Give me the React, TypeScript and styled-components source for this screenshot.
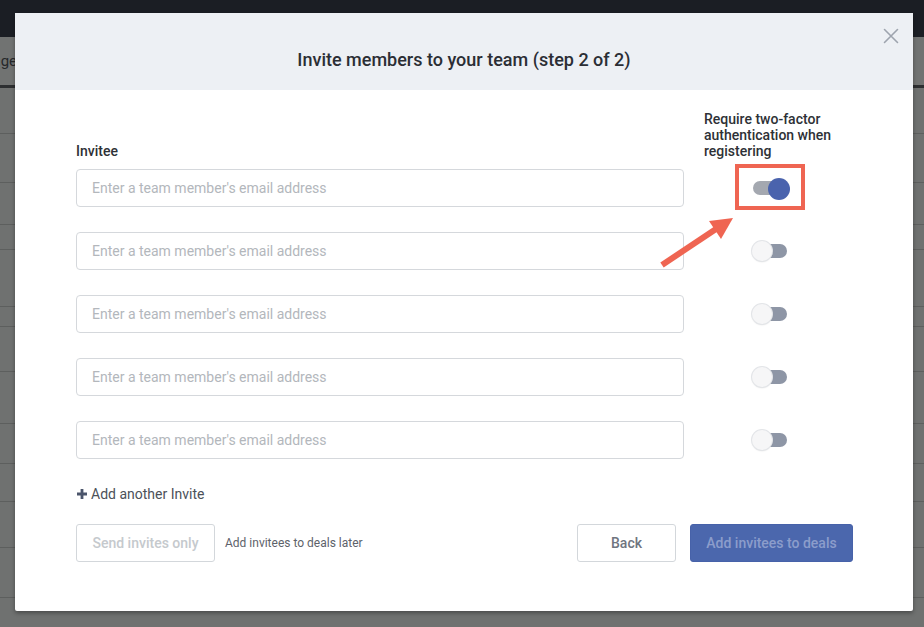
import React from "react";
import styled, { createGlobalStyle } from "styled-components";

const Global = createGlobalStyle`
  html, body { margin: 0; padding: 0; background: #707271; }
  body {
    width: 924px;
    height: 627px;
    overflow: hidden;
    font-family: Roboto, "Liberation Sans", Arial, sans-serif;
  }
  * { box-sizing: border-box; }
`;

const Page = styled.div`
  position: relative;
  width: 924px;
  height: 627px;
  overflow: hidden;
  background-color: #6f7170;
`;

const TopBar = styled.div`
  height: 37px;
  background: #1b1e24;
`;

const SubBar = styled.div`
  height: 51px;
  display: flex;
  align-items: center;
  background-color: #717372;
  border-bottom: 3px solid #2d2f31;
`;

const BehindTab = styled.span`
  margin-left: -37px;
  font-size: 15px;
  color: #26282a;
`;

const BehindRow = styled.div<{ $h: number }>`
  height: ${(p) => p.$h}px;
  background-color: #6f7170;
  border-bottom: 1px solid #5d5f5e;
`;

const Modal = styled.div`
  position: absolute;
  left: 15px;
  top: 13px;
  width: 898px;
  height: 598px;
  background: #ffffff;
  border-radius: 2px;
  box-shadow: 0 2px 4px rgba(0, 0, 0, 0.35);
  display: flex;
  flex-direction: column;
`;

const Header = styled.div`
  position: relative;
  height: 77px;
  background: #edf0f4;
  display: flex;
  align-items: center;
  justify-content: center;
  padding-top: 16px;
`;

const Title = styled.h2`
  margin: 0;
  font-size: 18px;
  font-weight: 500;
  color: #2b2e34;
`;

const Close = styled.button`
  position: absolute;
  right: 13px;
  top: 14px;
  width: 18px;
  height: 18px;
  padding: 0;
  border: 0;
  background: transparent;
  display: flex;
  align-items: center;
  justify-content: center;
  cursor: pointer;
`;

const Body = styled.div`
  position: relative;
  flex: 1;
  padding: 21px 60px 0 61px;
  display: flex;
  flex-direction: column;
`;

const Grid = styled.div`
  display: grid;
  grid-template-columns: 608px 132px;
  column-gap: 20px;
  align-items: center;
`;

const LabelRow = styled(Grid)`
  align-items: end;
  margin-bottom: 10px;
`;

const Label = styled.div`
  font-size: 14px;
  font-weight: 500;
  line-height: 16px;
  color: #2e3136;
`;

const Rows = styled.div`
  display: flex;
  flex-direction: column;
  gap: 25px;
`;

const EmailInput = styled.input`
  width: 608px;
  height: 38px;
  border: 1px solid #d5d8dc;
  border-radius: 4px;
  padding: 0 15px;
  font-family: Roboto, "Liberation Sans", Arial, sans-serif;
  font-size: 14px;
  color: #2e3136;
  outline: none;
  &::placeholder {
    color: #b3b7bc;
  }
`;

const ToggleCell = styled.div`
  position: relative;
  display: flex;
  justify-content: flex-start;
  padding-left: 48px;
  height: 38px;
  align-items: center;
`;

const Toggle = styled.div`
  position: relative;
  width: 36px;
  height: 22px;
`;

const Track = styled.div<{ $on: boolean }>`
  position: absolute;
  left: 1px;
  right: 1px;
  top: 4px;
  height: 14px;
  border-radius: 7px;
  background: ${(p) => (p.$on ? "#a4a8b0" : "#8e96a6")};
`;

const Knob = styled.div<{ $on: boolean }>`
  position: absolute;
  top: 1px;
  ${(p) => (p.$on ? "right: -2px;" : "left: 0;")}
  width: ${(p) => (p.$on ? 22 : 20)}px;
  height: ${(p) => (p.$on ? 22 : 20)}px;
  border-radius: 50%;
  background: ${(p) => (p.$on ? "#4a63ad" : "#f6f6f7")};
  box-shadow: ${(p) =>
    p.$on ? "none" : "0 0 0 1px #e3e5e8, 0 1px 2px rgba(0,0,0,0.12)"};
`;

const Highlight = styled.div`
  position: absolute;
  left: 31px;
  top: -5px;
  width: 70px;
  height: 46px;
  border: 4px solid #ef6552;
  pointer-events: none;
`;

const Arrow = styled.svg`
  position: absolute;
  left: 0;
  top: 0;
  overflow: visible;
  pointer-events: none;
`;

const AddLink = styled.button`
  margin-top: 27px;
  align-self: flex-start;
  display: flex;
  align-items: center;
  gap: 3px;
  padding: 0;
  border: 0;
  background: transparent;
  font-family: Roboto, "Liberation Sans", Arial, sans-serif;
  font-size: 14px;
  line-height: 16px;
  color: #4c5159;
  cursor: pointer;
`;

const Footer = styled.div`
  margin-top: 22px;
  display: flex;
  align-items: center;
`;

const Button = styled.button<{ $variant?: "ghost" | "outline" | "primary"; $w: number }>`
  height: 38px;
  width: ${(p) => p.$w}px;
  border-radius: 3px;
  font-family: Roboto, "Liberation Sans", Arial, sans-serif;
  font-size: 14px;
  font-weight: 500;
  cursor: pointer;
  border: 1px solid
    ${(p) => (p.$variant === "primary" ? "#4762a9" : "#d3d7db")};
  background: ${(p) => (p.$variant === "primary" ? "#4b67ad" : "#ffffff")};
  color: ${(p) =>
    p.$variant === "primary"
      ? "#8c9dcb"
      : p.$variant === "ghost"
      ? "#c5c9cd"
      : "#6f7580"};
`;

const Hint = styled.span`
  margin-left: 10px;
  font-size: 12px;
  color: #5d626a;
`;

const Spacer = styled.div`
  flex: 1;
`;

const RightButtons = styled.div`
  display: flex;
  gap: 14px;
`;

const rows = [true, false, false, false, false];

export default function App() {
  return (
    <>
      <Global />
      <Page>
        <TopBar />
        <SubBar>
          <BehindTab>Manager</BehindTab>
        </SubBar>
        {[46, 49, 42, 25, 57, 20, 45, 52, 40, 38, 46, 50, 36, 47, 44].map(
          (h, i) => (
            <BehindRow key={i} $h={h} />
          )
        )}
        <Modal>
          <Header>
            <Title>Invite members to your team (step 2 of 2)</Title>
            <Close aria-label="Close">
              <svg width="16" height="16" viewBox="0 0 16 16">
                <path
                  d="M1.5 1.5 L14.5 14.5 M14.5 1.5 L1.5 14.5"
                  stroke="#9ea4ae"
                  strokeWidth="1.6"
                  strokeLinecap="round"
                />
              </svg>
            </Close>
          </Header>
          <Body>
            <LabelRow>
              <Label>Invitee</Label>
              <Label>
                Require two-factor
                <br />
                authentication when
                <br />
                registering
              </Label>
            </LabelRow>
            <Rows>
              {rows.map((on, i) => (
                <Grid key={i}>
                  <EmailInput placeholder="Enter a team member's email address" />
                  <ToggleCell>
                    <Toggle>
                      <Track $on={on} />
                      <Knob $on={on} />
                    </Toggle>
                    {i === 0 && <Highlight />}
                  </ToggleCell>
                </Grid>
              ))}
            </Rows>
            <AddLink>
              <svg width="12" height="12" viewBox="0 0 12 12">
                <path
                  d="M6 1 V11 M1 6 H11"
                  stroke="#4b556b"
                  strokeWidth="2.8"
                />
              </svg>
              Add another Invite
            </AddLink>
            <Footer>
              <Button $variant="ghost" $w={139}>
                Send invites only
              </Button>
              <Hint>Add invitees to deals later</Hint>
              <Spacer />
              <RightButtons>
                <Button $variant="outline" $w={99}>
                  Back
                </Button>
                <Button $variant="primary" $w={163}>
                  Add invitees to deals
                </Button>
              </RightButtons>
            </Footer>
            <Arrow width="1" height="1">
              <g transform="translate(-15,-90)">
                <line
                  x1="662"
                  y1="265"
                  x2="716"
                  y2="229"
                  stroke="#ef6552"
                  strokeWidth="6"
                />
                <polygon points="733,218 709,221 721,239" fill="#ef6552" />
              </g>
            </Arrow>
          </Body>
        </Modal>
      </Page>
    </>
  );
}
